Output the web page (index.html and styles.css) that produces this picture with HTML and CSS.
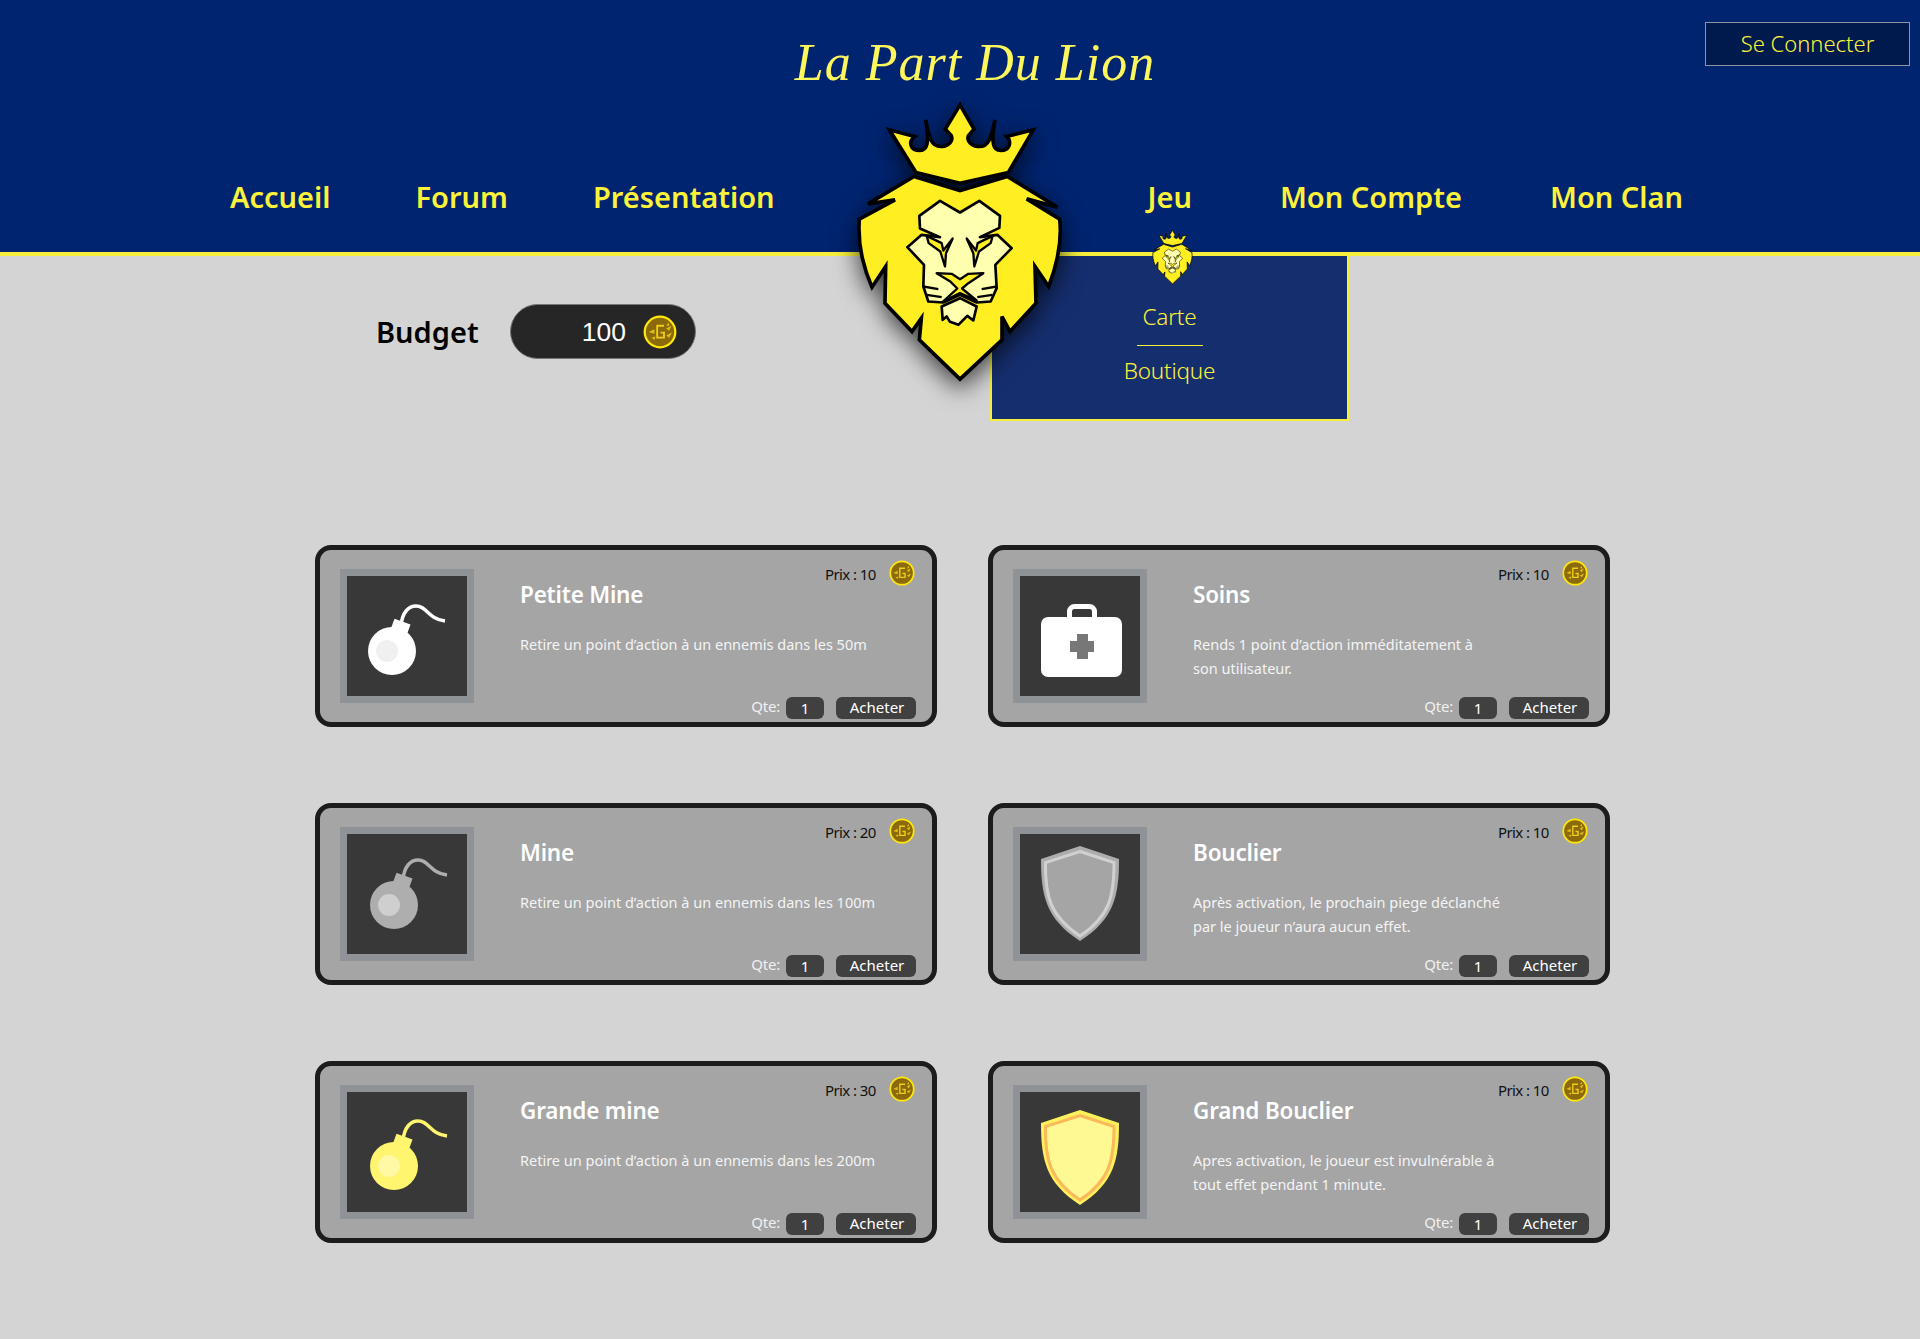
FILE: index.html
```html
<!DOCTYPE html>
<html lang="fr">
<head>
<meta charset="utf-8">
<title>La Part Du Lion</title>
<link rel="stylesheet" href="styles.css">
</head>
<body>
<svg class="defs" width="0" height="0" aria-hidden="true">
  <defs>
    <symbol id="lion" viewBox="285 295 630 860">
      <path class="l-main" d="M468 518 L388 390 L464 410 C444 425 450 452 480 452 C500 452 510 432 497 360 C507 410 512 442 545 440 C566 438 580 424 574 408 L556 388 L600 315 L642 388 L625 408 C620 424 634 438 655 440 C688 442 694 410 705 360 C692 432 700 452 722 452 C750 452 756 425 740 410 L820 390 L745 518 L600 550 Z"/>
      <path class="l-main" d="M462 530 L600 572 L742 530 L892 622 L800 597 L899 658 C905 710 900 770 866 860 L825 800 L828 910 L750 995 L726 950 L726 1020 L600 1138 L478 1020 L484 955 L456 995 L375 910 L377 800 L336 862 C300 780 294 710 298 658 L405 600 L324 612 Z"/>
      <path class="l-face" d="M478 648 L540 603 L600 638 L658 603 L720 648 L718 684 L660 712 L712 705 L755 745 L706 795 L710 865 L692 905 L650 908 L600 885 L550 908 L505 905 L490 860 L492 795 L442 742 L485 705 L540 712 L480 686 Z"/>
      <path class="l-eye" d="M500 708 L545 730 L550 752 L578 716 L558 760 L555 800 L541 755 L506 730 Z"/>
      <path class="l-eye" d="M698 708 L653 730 L648 752 L620 716 L640 760 L643 800 L657 755 L692 730 Z"/>
      <path class="l-line" d="M490 860 L535 868 M500 885 L545 892 M710 860 L665 868 M697 885 L652 892"/>
      <path class="l-eye" d="M530 820 L575 822 L600 838 L625 822 L670 820 L625 850 L606 866 L650 902 L600 880 L548 906 L592 866 L572 846 Z"/>
      <path class="l-face" d="M600 895 L650 920 L640 962 L622 948 L595 975 L570 966 L560 950 L548 960 L545 920 Z"/>
    </symbol>
    <symbol id="coin" viewBox="0 0 30 30">
      <circle cx="15" cy="15" r="13.500" fill="#8a6a0b" stroke="#ffe70a" stroke-width="2"/>
      <path d="M18.500 9.500 H12.500 V20 H18.500 V15.500 H15.500" fill="none" stroke="#f0cf18" stroke-width="1.600"/>
      <path d="M5 15 L10 12.500 V16.500 Z M20.500 12 L25 9.500 L23 14 Z M20.500 18 L25.500 15.500 L23 20 Z M20.500 9.500 L23 6.500 V9.500 Z M7.500 20 L11 19 L10 22 Z" fill="#e2bf14"/>
    </symbol>
    <symbol id="bomb" viewBox="0 0 120 120">
      <path class="b-fuse" d="M56 46 C57 32 64 26 71 26 C82 26 83 39 100 41"/>
      <rect class="b-body" x="47" y="41" width="17" height="13" transform="rotate(20 55 47)"/>
      <circle class="b-body" cx="47" cy="71" r="24"/>
      <circle class="b-core" cx="42" cy="71" r="11"/>
    </symbol>
    <symbol id="shield" viewBox="0 0 120 120">
      <path class="s-outer" d="M60 12 L99 25 C99 62 94 85 60 107 C26 85 21 62 21 25 Z"/>
      <path class="s-inner" d="M60 17.500 L94 28.500 C94 62 90 82 60 102 C30 82 25 62 25.500 28.500 Z"/>
    </symbol>
  </defs>
</svg>

<header class="site-header">
  <div class="top-row">
    <span></span>
    <div class="brand">La Part Du Lion</div>
    <a class="login" href="#">Se Connecter</a>
  </div>
  <nav class="main-nav">
    <ul class="nav-group">
      <li><a href="#">Accueil</a></li>
      <li><a href="#">Forum</a></li>
      <li><a href="#">Présentation</a></li>
    </ul>
    <ul class="nav-group nav-group-right">
      <li><a href="#">Jeu</a></li>
      <li><a href="#">Mon Compte</a></li>
      <li><a href="#">Mon Clan</a></li>
    </ul>
  </nav>
  <svg class="lion-big" role="img" aria-label="Lion"><use href="#lion"/></svg>
  <div class="dropdown">
    <svg class="lion-small" aria-hidden="true"><use href="#lion"/></svg>
    <a class="drop-link drop-first" href="#">Carte</a>
    <a class="drop-link" href="#">Boutique</a>
  </div>
</header>

<main class="content">
  <section class="budget">
    <h2 class="budget-label">Budget</h2>
    <div class="budget-pill">
      <span class="budget-value">100</span>
      <svg class="coin-big" aria-hidden="true"><use href="#coin"/></svg>
    </div>
  </section>

  <section class="shop">
    <article class="card">
      <div class="frame"><svg class="pic bomb-white" aria-hidden="true"><use href="#bomb" x="-2" y="4"/></svg></div>
      <div class="card-body">
        <div class="price"><span class="price-label">Prix : 10</span><svg class="coin" aria-hidden="true"><use href="#coin"/></svg></div>
        <h3 class="card-title">Petite Mine</h3>
        <p class="card-text">Retire un point d’action à un ennemis dans les 50m</p>
        <div class="buy"><span class="qty-label">Qte:</span><span class="qty">1</span><button class="buy-btn">Acheter</button></div>
      </div>
    </article>

    <article class="card">
      <div class="frame">
        <svg class="pic" viewBox="0 0 120 120" aria-hidden="true">
          <rect class="kit-handle" x="49.500" y="30.500" width="25" height="16" rx="5"/>
          <rect class="kit-box" x="21" y="41" width="81" height="60" rx="7"/>
          <path class="kit-cross" d="M57 58 H68 V65 H74 V76 H68 V83 H57 V76 H50 V65 H57 Z"/>
        </svg>
      </div>
      <div class="card-body">
        <div class="price"><span class="price-label">Prix : 10</span><svg class="coin" aria-hidden="true"><use href="#coin"/></svg></div>
        <h3 class="card-title">Soins</h3>
        <p class="card-text">Rends 1 point d’action imméditatement à<br>son utilisateur.</p>
        <div class="buy"><span class="qty-label">Qte:</span><span class="qty">1</span><button class="buy-btn">Acheter</button></div>
      </div>
    </article>

    <article class="card">
      <div class="frame"><svg class="pic bomb-grey" aria-hidden="true"><use href="#bomb"/></svg></div>
      <div class="card-body">
        <div class="price"><span class="price-label">Prix : 20</span><svg class="coin" aria-hidden="true"><use href="#coin"/></svg></div>
        <h3 class="card-title">Mine</h3>
        <p class="card-text">Retire un point d’action à un ennemis dans les 100m</p>
        <div class="buy"><span class="qty-label">Qte:</span><span class="qty">1</span><button class="buy-btn">Acheter</button></div>
      </div>
    </article>

    <article class="card">
      <div class="frame"><svg class="pic shield-grey" aria-hidden="true"><use href="#shield"/></svg></div>
      <div class="card-body">
        <div class="price"><span class="price-label">Prix : 10</span><svg class="coin" aria-hidden="true"><use href="#coin"/></svg></div>
        <h3 class="card-title">Bouclier</h3>
        <p class="card-text">Après activation, le prochain piege déclanché<br>par le joueur n’aura aucun effet.</p>
        <div class="buy"><span class="qty-label">Qte:</span><span class="qty">1</span><button class="buy-btn">Acheter</button></div>
      </div>
    </article>

    <article class="card">
      <div class="frame"><svg class="pic bomb-yellow" aria-hidden="true"><use href="#bomb" y="3"/></svg></div>
      <div class="card-body">
        <div class="price"><span class="price-label">Prix : 30</span><svg class="coin" aria-hidden="true"><use href="#coin"/></svg></div>
        <h3 class="card-title">Grande mine</h3>
        <p class="card-text">Retire un point d’action à un ennemis dans les 200m</p>
        <div class="buy"><span class="qty-label">Qte:</span><span class="qty">1</span><button class="buy-btn">Acheter</button></div>
      </div>
    </article>

    <article class="card">
      <div class="frame"><svg class="pic shield-yellow" aria-hidden="true"><use href="#shield" y="6"/></svg></div>
      <div class="card-body">
        <div class="price"><span class="price-label">Prix : 10</span><svg class="coin" aria-hidden="true"><use href="#coin"/></svg></div>
        <h3 class="card-title">Grand Bouclier</h3>
        <p class="card-text">Apres activation, le joueur est invulnérable à<br>tout effet pendant 1 minute.</p>
        <div class="buy"><span class="qty-label">Qte:</span><span class="qty">1</span><button class="buy-btn">Acheter</button></div>
      </div>
    </article>
  </section>
</main>
</body>
</html>
```

FILE: styles.css
```css
* { box-sizing: border-box; }

html, body {
  margin: 0;
  padding: 0;
}

body {
  min-height: 1339px;
  background: #d4d4d4;
  font-family: "Noto Sans", "Open Sans", sans-serif;
  overflow: hidden;
}

a { color: inherit; text-decoration: none; }

.defs { display: block; height: 0; }

.site-header {
  position: relative;
  height: 256px;
  background: #002470;
  border-bottom: 4px solid #f6f03c;
  color: #fdf23a;
}

.top-row {
  display: grid;
  grid-template-columns: 1fr auto 1fr;
  height: 140px;
  padding: 22px 10px 0 40px;
}

.brand {
  margin-top: -2px;
  font-family: "Liberation Serif", serif;
  font-style: italic;
  font-size: 52px;
  line-height: 86px;
  height: 86px;
  color: #fdf65c;
  letter-spacing: 1px;
  white-space: nowrap;
}

.login {
  justify-self: end;
  display: flex;
  align-items: center;
  justify-content: center;
  width: 205px;
  height: 44px;
  padding-bottom: 2px;
  background: #001a4d;
  border: 1px solid #8f94a0;
  font-size: 22px;
  font-weight: 300;
  color: #fbf23c;
}

.main-nav {
  display: flex;
  justify-content: space-between;
  padding: 33px 237px 0 230px;
}

.nav-group {
  display: flex;
  gap: 85px;
  margin: 0;
  padding: 0;
  list-style: none;
  font-size: 29px;
  font-weight: 600;
  line-height: 48px;
}

.nav-group-right { gap: 88px; }

.lion-big {
  position: absolute;
  z-index: 3;
  left: 855px;
  top: 98px;
  width: 210px;
  height: 287px;
  filter: drop-shadow(0 8px 12px rgba(0, 0, 0, 0.7));
}

.l-main { fill: #ffef22; stroke: #000; stroke-width: 11; stroke-linejoin: miter; }
.l-face { fill: #ffffb0; stroke: #000; stroke-width: 8; stroke-linejoin: round; }
.l-eye { fill: #ffef22; stroke: #000; stroke-width: 7; stroke-linejoin: round; }
.l-line { fill: none; stroke: #000; stroke-width: 7; }

.dropdown {
  position: absolute;
  z-index: 2;
  left: 990px;
  top: 254px;
  width: 359px;
  height: 167px;
  display: flex;
  flex-direction: column;
  align-items: center;
  padding-top: 46px;
  background: #152e6e;
  border: 2px solid #f6f03c;
  color: #fdf23a;
}

.lion-small {
  position: absolute;
  left: 160px;
  top: -27px;
  width: 41px;
  height: 56px;
}

.drop-link {
  font-size: 22.500px;
  font-weight: 300;
  line-height: 30px;
  letter-spacing: -0.2px;
}

.drop-first {
  width: 66px;
  padding-bottom: 13px;
  margin-bottom: 10px;
  border-bottom: 1px solid #f6f03c;
  text-align: center;
  line-height: 30px;
}

.content {
  padding: 48px 0 0 315px;
}

.budget {
  display: flex;
  align-items: center;
  height: 55px;
  padding-left: 61px;
}

.budget-label {
  margin: 0 31px 0 0;
  width: 103px;
  font-size: 29px;
  font-weight: 600;
  line-height: 40px;
  color: #000;
}

.budget-pill {
  display: flex;
  align-items: center;
  justify-content: flex-end;
  gap: 17px;
  width: 186px;
  height: 55px;
  padding-right: 18px;
  background: #262626;
  border: 1px solid #777;
  border-radius: 28px;
}

.budget-value {
  padding-top: 2px;
  font-family: "Liberation Sans", sans-serif;
  font-size: 26.500px;
  color: #fff;
}

.coin-big { width: 34px; height: 34px; }

.shop {
  display: grid;
  grid-template-columns: 622px 622px;
  grid-auto-rows: 182px;
  column-gap: 51px;
  row-gap: 76px;
  margin-top: 186px;
}

.card {
  display: flex;
  gap: 46px;
  padding: 10px 16px 3px 20px;
  background: #a5a5a5;
  border: 5px solid #1c1c1c;
  border-radius: 16px;
}

.frame {
  flex: none;
  width: 134px;
  height: 134px;
  margin-top: 9px;
  padding: 7px;
  background: #8f9397;
}

.pic {
  display: block;
  width: 120px;
  height: 120px;
  background: #383838;
}

.bomb-white { --b: #fff; --c: #f0f0f0; }
.bomb-grey { --b: #aeaeae; --c: #cfcfcf; }
.bomb-yellow { --b: #fff56f; --c: #fff8a4; }

.b-fuse { fill: none; stroke: var(--b); stroke-width: 3.500; }
.b-body { fill: var(--b); }
.b-core { fill: var(--c); }

.kit-handle { fill: none; stroke: #fff; stroke-width: 5; }
.kit-box { fill: #fff; }
.kit-cross { fill: #777; }

.shield-grey { --o: #adadad; --r: #d0d0d0; --f: #a5a5a5; }
.shield-yellow { --o: #fff15c; --r: #fbb95a; --f: #fff994; }

.s-outer { fill: var(--o); }
.s-inner { fill: var(--f); stroke: var(--r); stroke-width: 3; }

.card-body {
  flex: 1;
  display: flex;
  flex-direction: column;
  min-width: 0;
}

.price {
  display: flex;
  align-items: center;
  justify-content: flex-end;
  height: 26px;
  padding-right: 1px;
  color: #111;
}

.price-label {
  width: 64px;
  font-size: 15px;
  line-height: 26px;
  letter-spacing: -0.6px;
  padding-top: 1px;
}

.coin { width: 26px; height: 26px; }

.card-title {
  margin: -6px 0 0;
  font-size: 22.500px;
  font-weight: 600;
  line-height: 30px;
  color: #fff;
  letter-spacing: -0.2px;
}

.card-text {
  margin: 22px 0 0;
  font-size: 14.500px;
  line-height: 24px;
  color: #f4f4f4;
}

.buy {
  display: flex;
  align-items: center;
  justify-content: flex-end;
  margin-top: auto;
  height: 22px;
  color: #f0f0f0;
  font-size: 15px;
}

.qty-label {
  margin-right: 6px;
  margin-top: -4px;
  letter-spacing: -0.2px;
}

.qty {
  display: flex;
  align-items: center;
  justify-content: center;
  width: 38px;
  height: 22px;
  padding-bottom: 1px;
  margin-right: 12px;
  background: #404040;
  border-radius: 6px;
  color: #fff;
}

.buy-btn {
  width: 80px;
  height: 22px;
  padding: 0 0 3px 2px;
  border: 0;
  background: #404040;
  border-radius: 6px;
  color: #fff;
  font-family: inherit;
  font-size: 15px;
}
```
